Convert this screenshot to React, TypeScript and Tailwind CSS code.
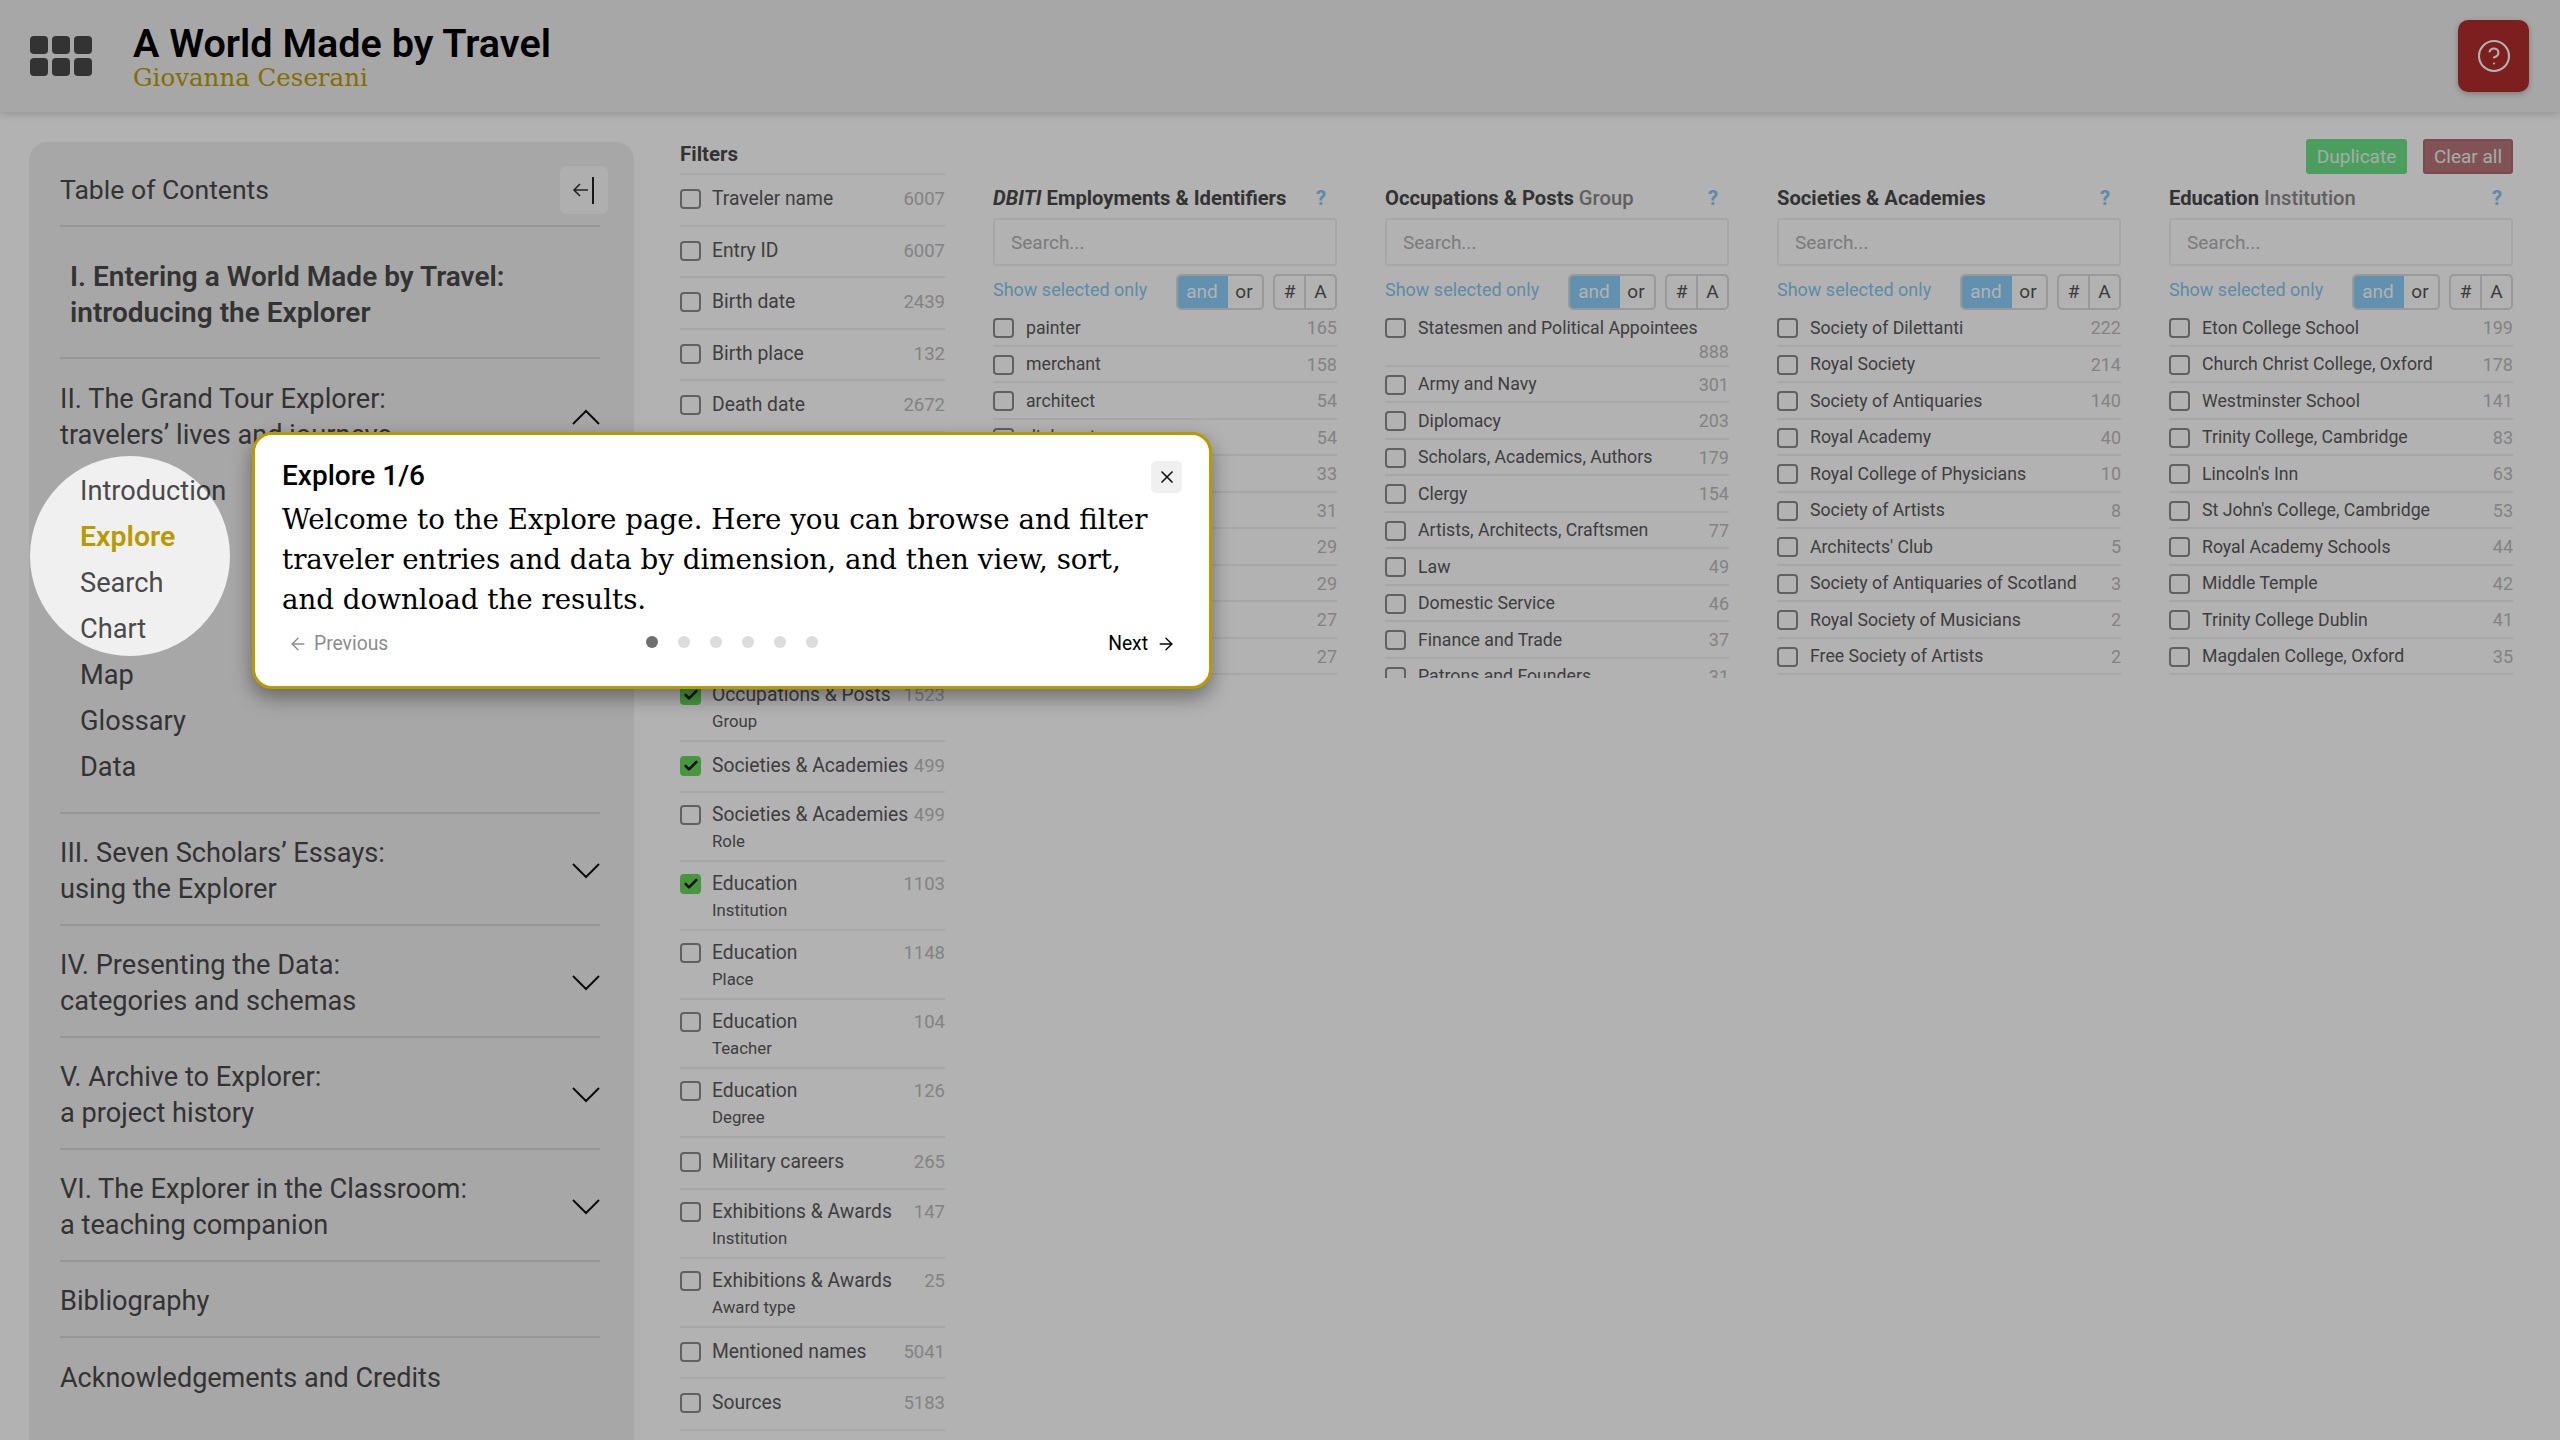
import { ArrowLeft, ArrowRight, Check, CircleHelp, X } from "lucide-react";

const filters = [
  { label: "Traveler name", count: 6007 },
  { label: "Entry ID", count: 6007 },
  { label: "Birth date", count: 2439 },
  { label: "Birth place", count: 132 },
  { label: "Death date", count: 2672 },
  { label: "Death place", count: 1204, hidden: true },
  { label: "Parents", sub: "Father", count: 911, hidden: true },
  { label: "Travel places", count: 5120, hidden: true },
  { label: "Employments", sub: "Identifiers", count: 1320, hidden: true },
  { label: "Occupations & Posts", sub: "Group", count: 1523, checked: true },
  { label: "Societies & Academies", count: 499, checked: true },
  { label: "Societies & Academies", sub: "Role", count: 499 },
  { label: "Education", sub: "Institution", count: 1103, checked: true },
  { label: "Education", sub: "Place", count: 1148 },
  { label: "Education", sub: "Teacher", count: 104 },
  { label: "Education", sub: "Degree", count: 126 },
  { label: "Military careers", count: 265 },
  { label: "Exhibitions & Awards", sub: "Institution", count: 147 },
  { label: "Exhibitions & Awards", sub: "Award type", count: 25 },
  { label: "Mentioned names", count: 5041 },
  { label: "Sources", count: 5183 },
];

const panels = [
  {
    key: "dbiti",
    title: (
      <>
        <em>DBITI</em> Employments &amp; Identifiers
      </>
    ),
    items: [
      ["painter", 165],
      ["merchant", 158],
      ["architect", 54],
      ["diplomat", 54],
      ["antiquary", 33],
      ["author", 31],
      ["collector", 29],
      ["engraver", 29],
      ["physician", 27],
      ["sculptor", 27],
    ],
  },
  {
    key: "occupations",
    title: (
      <>
        Occupations &amp; Posts <span className="font-medium text-[#8a8a8a]">Group</span>
      </>
    ),
    items: [
      ["Statesmen and Political Appointees", 888],
      ["Army and Navy", 301],
      ["Diplomacy", 203],
      ["Scholars, Academics, Authors", 179],
      ["Clergy", 154],
      ["Artists, Architects, Craftsmen", 77],
      ["Law", 49],
      ["Domestic Service", 46],
      ["Finance and Trade", 37],
      ["Patrons and Founders", 31],
    ],
  },
  {
    key: "societies",
    title: <>Societies &amp; Academies</>,
    items: [
      ["Society of Dilettanti", 222],
      ["Royal Society", 214],
      ["Society of Antiquaries", 140],
      ["Royal Academy", 40],
      ["Royal College of Physicians", 10],
      ["Society of Artists", 8],
      ["Architects' Club", 5],
      ["Society of Antiquaries of Scotland", 3],
      ["Royal Society of Musicians", 2],
      ["Free Society of Artists", 2],
    ],
  },
  {
    key: "education",
    title: (
      <>
        Education <span className="font-medium text-[#8a8a8a]">Institution</span>
      </>
    ),
    items: [
      ["Eton College School", 199],
      ["Church Christ College, Oxford", 178],
      ["Westminster School", 141],
      ["Trinity College, Cambridge", 83],
      ["Lincoln's Inn", 63],
      ["St John's College, Cambridge", 53],
      ["Royal Academy Schools", 44],
      ["Middle Temple", 42],
      ["Trinity College Dublin", 41],
      ["Magdalen College, Oxford", 35],
    ],
  },
];

const tocSubItems = ["Introduction", "Explore", "Search", "Chart", "Map", "Glossary", "Data"];

const tocSections = [
  ["III. Seven Scholars’ Essays:", "using the Explorer"],
  ["IV. Presenting the Data:", "categories and schemas"],
  ["V. Archive to Explorer:", "a project history"],
  ["VI. The Explorer in the Classroom:", "a teaching companion"],
];

function Chevron({ up = false }: { up?: boolean }) {
  return (
    <svg width="28" height="16" viewBox="0 0 28 16" fill="none" stroke="#111" strokeWidth="2" className="shrink-0">
      <polyline points={up ? "1,15 14,2 27,15" : "1,1 14,14 27,1"} />
    </svg>
  );
}

function Checkbox({ checked = false }: { checked?: boolean }) {
  if (checked) {
    return (
      <div className="flex h-[20px] w-[21px] shrink-0 items-center justify-center rounded-[4px] bg-[#68d95c]">
        <Check size={16} strokeWidth={4} color="#1c1c1c" />
      </div>
    );
  }
  return <div className="h-[20px] w-[21px] shrink-0 rounded-[4px] border-2 border-[#8c8c8c] bg-white" />;
}

function Panel({ panel }: { panel: (typeof panels)[number] }) {
  return (
    <div className="flex w-[344px] flex-col">
      <div className="flex h-[36px] items-center justify-between pr-[11px] text-[20.2px] font-bold text-[#4a4a4a]">
        <span>{panel.title}</span>
        <span className="text-[#84c6f2]">?</span>
      </div>
      <div className="mt-[2px] flex h-[48px] items-center rounded-[3px] border-2 border-[#efefef] pl-[16px] pt-[2px] text-[19px] text-[#b0b0b0]">
        Search...
      </div>
      <div className="mt-[8px] flex h-[36px] items-center">
        <span className="-mt-[5px] text-[18px] text-[#88c8ee]">Show selected only</span>
        <div className="ml-auto flex h-full overflow-hidden rounded-[5px] border-2 border-[#dcdcdc] text-[19px] text-[#555]">
          <span className="-m-[2px] flex w-[52px] items-center justify-center bg-[#8cd0fa] text-white">and</span>
          <span className="flex w-[36px] items-center justify-center">or</span>
        </div>
        <div className="ml-[9px] flex h-full overflow-hidden rounded-[5px] border-2 border-[#dcdcdc] text-[19px] text-[#555]">
          <span className="flex w-[31px] items-center justify-center border-r-2 border-[#dcdcdc]">#</span>
          <span className="flex w-[29px] items-center justify-center">A</span>
        </div>
      </div>
      <div className="h-[368px] overflow-hidden">
        {panel.items.map(([label, count]) => {
          const wraps = String(label).length > 33 && panel.key === "occupations";
          return (
            <div
              key={label}
              className={`flex items-start border-b-2 border-[#f0f0f0] ${wraps ? "h-[56.5px] flex-wrap" : "h-[36.5px]"}`}
            >
              <div className={`flex h-[36px] items-center ${wraps ? "w-full" : ""}`}>
                <Checkbox />
                <span className="ml-[12px] text-[17.7px] text-[#5a5a5a]">{label}</span>
              </div>
              <span className={`ml-auto text-[18px] leading-[36px] text-[#bcbcbc] ${wraps ? "-mt-[12px]" : ""}`}>
                {count}
              </span>
            </div>
          );
        })}
      </div>
    </div>
  );
}

export default function App() {
  return (
    <div className="relative flex h-[1440px] w-[2560px] flex-col overflow-hidden bg-white font-['Roboto',sans-serif]">
      <header className="relative z-10 flex h-[112px] shrink-0 items-center bg-[#f0f0f0] pl-[30px] pr-[31px] shadow-[0_2px_8px_rgba(0,0,0,0.18)]">
        <div className="grid grid-cols-3 gap-x-[4px] gap-y-[4px]">
          {[0, 1, 2, 3, 4, 5].map((i) => (
            <div key={i} className="h-[18px] w-[18px] rounded-[4px] bg-[#4a4a4a]" />
          ))}
        </div>
        <div className="ml-[41px] flex flex-col pt-[2px]">
          <div className="text-[39.6px] font-semibold leading-[44px] text-black">A World Made by Travel</div>
          <div className="-mt-[3px] font-['DejaVu_Serif',serif] text-[24.5px] leading-[30px] text-[#b89f00]">
            Giovanna Ceserani
          </div>
        </div>
        <button className="ml-auto flex h-[72px] w-[71px] items-center justify-center rounded-[10px] bg-[#b32d2d] shadow-[0_2px_6px_rgba(0,0,0,0.25)]">
          <CircleHelp size={36} strokeWidth={1.4} color="#ffffff" />
        </button>
      </header>

      <div className="flex min-h-0 flex-1">
        <aside className="ml-[29px] mt-[30px] w-[605px] shrink-0 rounded-t-[18px] bg-[#f0f0f0] pl-[31px] pr-[34px] text-[27.2px] leading-[36px] text-[#4a4a4a]">
          <div className="flex h-[85px] items-start justify-between border-b-2 border-[#d8d8d8] pt-[24px]">
            <span className="flex h-[48px] items-center text-[26.6px]">Table of Contents</span>
            <button className="-mr-[8px] flex h-[48px] w-[48px] items-center justify-center rounded-[6px] bg-[#fbfbfb]">
              <svg width="24" height="28" viewBox="0 0 24 28" fill="none" stroke="#333" strokeWidth="1.6">
                <path d="M2 14h14M8 8l-6 6 6 6" />
                <path d="M21 1v27" strokeWidth="2" stroke="#222" />
              </svg>
            </button>
          </div>
          <div className="flex h-[132px] flex-col justify-center border-b-2 border-[#d8d8d8] pl-[10px] pt-[6px] text-[28px] font-semibold">
            <span>I. Entering a World Made by Travel:</span>
            <span>introducing the Explorer</span>
          </div>
          <div className="border-b-2 border-[#d8d8d8] pb-[22px]">
            <div className="flex h-[112px] items-center justify-between pt-[3px]">
              <div className="flex flex-col">
                <span>II. The Grand Tour Explorer:</span>
                <span>travelers’ lives and journeys</span>
              </div>
              <Chevron up />
            </div>
            <div className="-mt-[3px] flex flex-col pl-[20px]">
              {tocSubItems.map((item) => (
                <div
                  key={item}
                  className={`flex h-[46px] items-center ${item === "Explore" ? "text-[28.5px] font-semibold text-[#b89b00]" : ""}`}
                >
                  {item}
                </div>
              ))}
            </div>
          </div>
          {tocSections.map(([first, second]) => (
            <div key={first} className="flex h-[112px] items-center justify-between border-b-2 border-[#d8d8d8] pt-[3px]">
              <div className="flex flex-col">
                <span>{first}</span>
                <span>{second}</span>
              </div>
              <Chevron />
            </div>
          ))}
          <div className="flex h-[76px] items-center border-b-2 border-[#d8d8d8] pt-[3px]">Bibliography</div>
          <div className="flex h-[80px] items-center text-[27px]">Acknowledgements and Credits</div>
        </aside>

        <section className="ml-[46px] w-[265px] shrink-0 pt-[27px]">
          <div className="h-[36px] border-b-2 border-[#f0f0f0] text-[20.5px] font-bold leading-[30px] text-[#4a4a4a]">
            Filters
          </div>
          {filters.map((f, i) => (
            <div
              key={i}
              className={`flex items-start justify-between border-b-2 border-[#f0f0f0] ${
                f.sub ? "h-[69px] pt-[10px]" : f.hidden ? "h-[51px] pt-[12px]" : "h-[51.5px] pt-[12px]"
              }`}
            >
              <div className="flex items-start">
                <div className="mt-[2px]">
                  <Checkbox checked={f.checked} />
                </div>
                <div className="ml-[11px] flex flex-col">
                  <span className="text-[19.3px] leading-[24px] text-[#5a5a5a]">{f.label}</span>
                  {f.sub && <span className="mt-[2px] text-[16.8px] leading-[24px] text-[#5a5a5a]">{f.sub}</span>}
                </div>
              </div>
              <span className="text-[18.5px] leading-[24px] text-[#bcbcbc]">{f.count}</span>
            </div>
          ))}
        </section>

        <main className="ml-[48px] flex w-[1520px] shrink-0 flex-col pt-[27px]">
          <div className="flex h-[35px] justify-end gap-[16px] text-[19px] text-[#eaf7ee]">
            <button className="flex w-[101px] items-center justify-center rounded-[3px] bg-[#6ee289] pt-[2px]">Duplicate</button>
            <button className="flex w-[90px] items-center justify-center rounded-[3px] border-2 border-[#b06a6e] bg-[#bb777b] pt-[2px]">
              Clear all
            </button>
          </div>
          <div className="mt-[6px] flex gap-[48px]">
            {panels.map((p) => (
              <Panel key={p.key} panel={p} />
            ))}
          </div>
        </main>
      </div>

      {/* spotlight around the highlighted menu, dims everything else */}
      <div className="absolute left-[30px] top-[456px] z-20 h-[200px] w-[200px] rounded-full shadow-[0_0_0_3000px_rgba(0,0,0,0.3)]" />

      <div className="absolute left-[252px] top-[432px] z-30 flex h-[257px] w-[960px] flex-col rounded-[20px] border-[3px] border-[#b89b00] bg-white pl-[27px] pr-[27px] pt-[23px] shadow-[0_8px_20px_rgba(0,0,0,0.4)]">
        <div className="flex h-[36px] items-center justify-between">
          <span className="text-[28px] font-medium text-black">Explore 1/6</span>
          <button className="mt-[2px] flex h-[32px] w-[31px] items-center justify-center rounded-[5px] bg-[#f0f0f0]">
            <X size={20} strokeWidth={2} color="#111" />
          </button>
        </div>
        <p className="mt-[6px] whitespace-nowrap font-['DejaVu_Serif',serif] text-[27.7px] leading-[40px] text-black">
          Welcome to the Explore page. Here you can browse and filter
          <br />
          traveler entries and data by dimension, and then view, sort,
          <br />
          and download the results.
        </p>
        <div className="mt-[4px] flex h-[40px] items-center">
          <div className="flex w-[364px] items-center pl-[6px] text-[19.3px] text-[#8c8c8c]">
            <ArrowLeft size={20} strokeWidth={1.6} />
            <span className="ml-[6px]">Previous</span>
          </div>
          <div className="-mt-[4px] flex gap-[20px]">
            {[0, 1, 2, 3, 4, 5].map((i) => (
              <span key={i} className={`h-[12px] w-[12px] rounded-full ${i === 0 ? "bg-[#6f6f6f]" : "bg-[#dddddd]"}`} />
            ))}
          </div>
          <div className="ml-auto mr-[6px] flex items-center text-[19.3px] text-black">
            <span>Next</span>
            <ArrowRight size={20} strokeWidth={1.6} className="ml-[8px]" />
          </div>
        </div>
      </div>
    </div>
  );
}
